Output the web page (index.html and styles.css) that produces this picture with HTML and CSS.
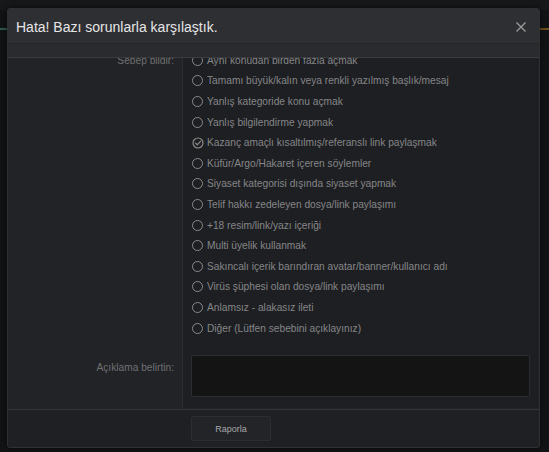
FILE: index.html
```html
<!DOCTYPE html>
<html lang="tr">
<head>
<meta charset="utf-8">
<link rel="stylesheet" href="styles.css">
</head>
<body>
<div class="backdrop">
  <div class="topbar"></div>
  <div class="accent-left"></div>
  <div class="accent-right"></div>
</div>
<div class="overlay">
  <div class="modal">
    <div class="modal-head">
      <h1 class="title">Hata! Bazı sorunlarla karşılaştık.</h1>
      <span class="close"><svg viewBox="0 0 10 10" width="10" height="10"><path d="M0.5 0.5 L9.5 9.5 M9.5 0.5 L0.5 9.5" stroke="#9a9a9a" stroke-width="1.4" fill="none"/></svg></span>
    </div>
    <div class="modal-strip"></div>
    <div class="modal-body">
      <div class="scroller">
        <div class="form-row">
          <div class="label-col"><span class="label">Sebep bildir:</span></div>
          <div class="input-col">
            <ul class="choices">
              <li class="choice"><span class="radio"></span>Aynı konudan birden fazla açmak</li>
              <li class="choice"><span class="radio"></span>Tamamı büyük/kalın veya renkli yazılmış başlık/mesaj</li>
              <li class="choice"><span class="radio"></span>Yanlış kategoride konu açmak</li>
              <li class="choice"><span class="radio"></span>Yanlış bilgilendirme yapmak</li>
              <li class="choice"><span class="radio checked"><svg viewBox="0 0 12 12" width="12" height="12"><circle cx="6" cy="6" r="5" fill="none" stroke="#8a8a8a" stroke-width="1.2"/><path d="M3.6 6.2 L5.3 7.8 L8.4 4.3" fill="none" stroke="#8a8a8a" stroke-width="1.2" stroke-linecap="round" stroke-linejoin="round"/></svg></span>Kazanç amaçlı kısaltılmış/referanslı link paylaşmak</li>
              <li class="choice"><span class="radio"></span>Küfür/Argo/Hakaret içeren söylemler</li>
              <li class="choice"><span class="radio"></span>Siyaset kategorisi dışında siyaset yapmak</li>
              <li class="choice"><span class="radio"></span>Telif hakkı zedeleyen dosya/link paylaşımı</li>
              <li class="choice"><span class="radio"></span>+18 resim/link/yazı içeriği</li>
              <li class="choice"><span class="radio"></span>Multi üyelik kullanmak</li>
              <li class="choice"><span class="radio"></span>Sakıncalı içerik barındıran avatar/banner/kullanıcı adı</li>
              <li class="choice"><span class="radio"></span>Virüs şüphesi olan dosya/link paylaşımı</li>
              <li class="choice"><span class="radio"></span>Anlamsız - alakasız ileti</li>
              <li class="choice"><span class="radio"></span>Diğer (Lütfen sebebini açıklayınız)</li>
            </ul>
          </div>
        </div>
        <div class="form-row">
          <div class="label-col"><span class="label label-mid">Açıklama belirtin:</span></div>
          <div class="input-col input-col-area">
            <div class="textarea"></div>
          </div>
        </div>
      </div>
    </div>
    <div class="modal-foot">
      <div class="foot-spacer"></div>
      <div class="foot-actions"><button class="btn">Raporla</button></div>
    </div>
  </div>
</div>
</body>
</html>
```

FILE: styles.css
```css
* { box-sizing: border-box; }
html, body {
  margin: 0;
  padding: 0;
  width: 549px;
  height: 452px;
  overflow: hidden;
  background: #111214;
  font-family: "Liberation Sans", Arial, sans-serif;
}
.backdrop {
  position: absolute;
  inset: 0;
  background: #121315;
}
.topbar {
  height: 10px;
  background: #17181a;
}
.accent-left {
  position: absolute;
  left: 0;
  top: 28px;
  width: 8px;
  height: 2px;
  background: #2d5a4c;
}
.accent-right {
  position: absolute;
  right: 0;
  top: 28px;
  width: 10px;
  height: 2px;
  background: #6b4f1c;
}
.overlay {
  position: absolute;
  inset: 0;
  padding: 8px 9px 4px 7px;
}
.modal {
  width: 533px;
  height: 440px;
  display: flex;
  flex-direction: column;
  background: #222326;
  border: 1px solid #2f3033;
  border-radius: 3px;
  overflow: hidden;
  box-shadow: 0 0 6px rgba(0,0,0,0.6);
}
.modal-head {
  height: 34px;
  flex: none;
  display: flex;
  align-items: center;
  justify-content: space-between;
  padding: 1px 13px 0 8px;
  background: #2e2f33;
}
.title {
  margin: 0;
  font-size: 14px;
  font-weight: normal;
  color: #e6e6e6;
}
.close {
  display: flex;
}
.modal-strip {
  height: 15px;
  flex: none;
  background: #2a2b2e;
  border-top: 1px solid #262729;
  border-bottom: 1px solid #3b3c3f;
}
.modal-body {
  flex: 1;
  overflow: hidden;
  min-height: 0;
}
.scroller {
  margin-top: -8px;
}
.form-row {
  display: flex;
}
.label-col {
  width: 175px;
  flex: none;
  background: #222326;
  border-right: 1px solid #2c2d30;
  text-align: right;
  padding-right: 8px;
}
.label {
  display: block;
  font-size: 10.2px;
  color: #6f7072;
  line-height: 20.6px;
  padding-top: 1px;
}
.label-mid {
  padding-top: 3px;
}
.input-col {
  flex: 1;
  background: #1e1f22;
  padding: 0 9px 0 8px;
}
.choices {
  list-style: none;
  margin: 0;
  padding: 0 0 17px 0;
}
.choice {
  height: 20.6px;
  display: flex;
  align-items: center;
  font-size: 10.2px;
  color: #858688;
  white-space: nowrap;
}
.radio {
  width: 11px;
  height: 11px;
  border: 1.3px solid #8a8a8a;
  border-radius: 50%;
  margin-right: 4px;
  margin-left: 1px;
  flex: none;
}
.radio.checked {
  border: none;
  width: 12px;
  height: 12px;
  margin-left: 0.5px;
  margin-right: 3.5px;
  display: flex;
}
.input-col-area {
  padding-bottom: 11px;
}
.textarea {
  height: 42px;
  background: #141415;
  border: 1px solid #2c2d30;
  border-radius: 2px;
}
.modal-foot {
  height: 38px;
  flex: none;
  display: flex;
  border-top: 1px solid #333437;
  background: #1f2023;
}
.foot-spacer {
  width: 175px;
  flex: none;
}
.foot-actions {
  padding: 6px 0 0 8px;
}
.btn {
  width: 80px;
  height: 25px;
  background: #232427;
  border: 1px solid #2c2d30;
  border-radius: 2px;
  color: #a7a8aa;
  font-family: "Liberation Sans", Arial, sans-serif;
  font-size: 9px;
  padding: 0;
}
```
